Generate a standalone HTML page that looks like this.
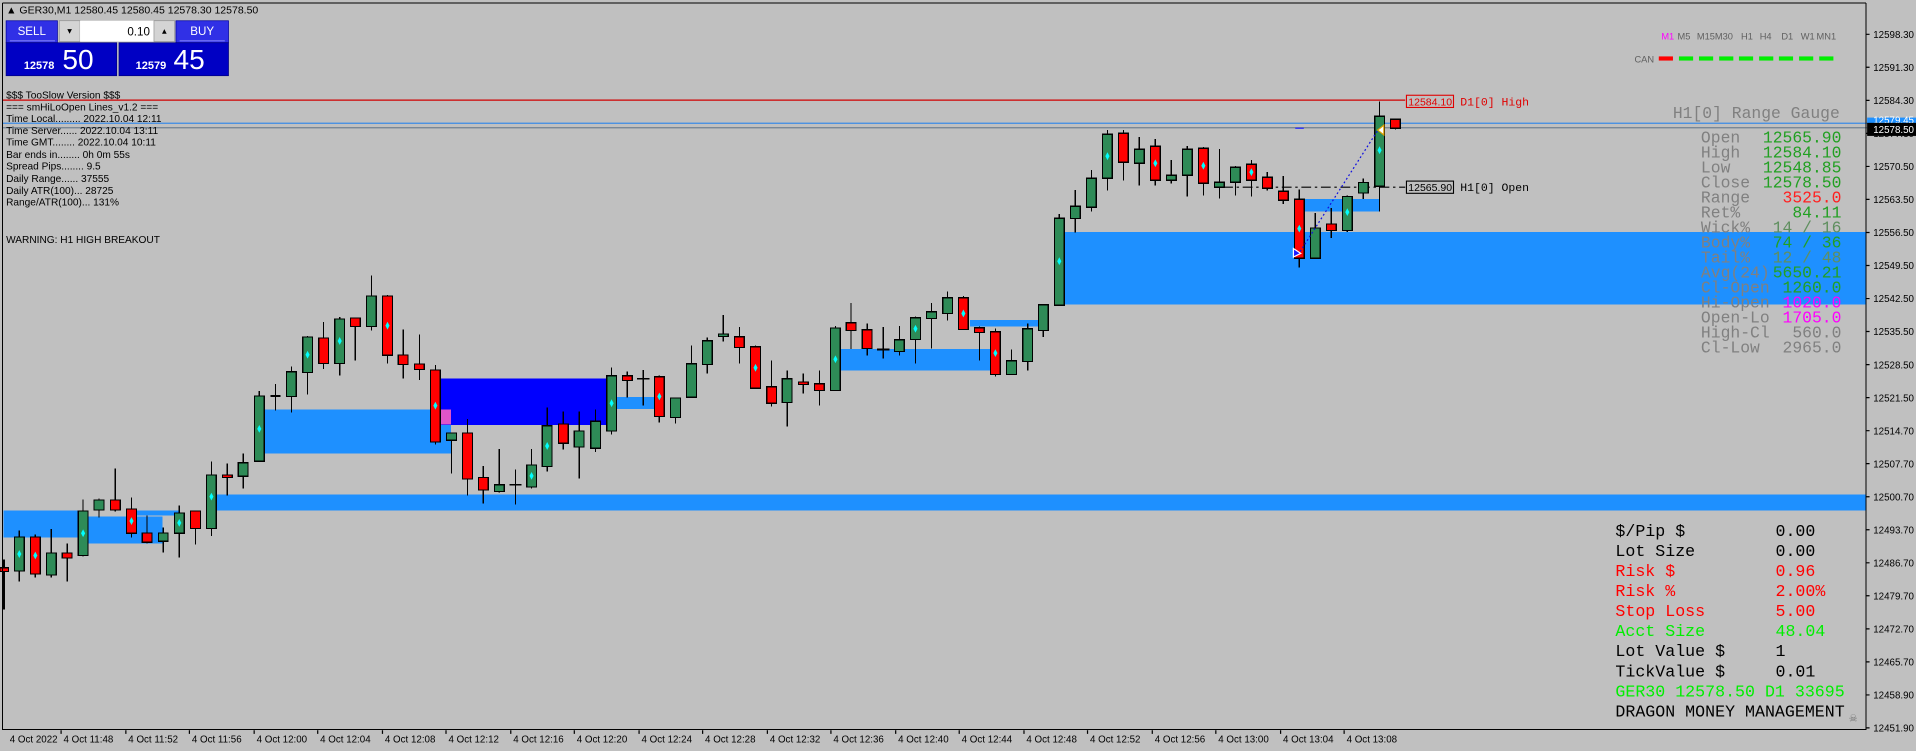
<!DOCTYPE html>
<html><head><meta charset="utf-8"><style>
html,body{margin:0;padding:0;background:#c0c0c0;overflow:hidden}
svg{display:block}
.g{fill:#2e8b57;stroke:#000;stroke-width:1}
.r{fill:#ff0000;stroke:#000;stroke-width:1}
.w{stroke:#000;stroke-width:1;fill:none}
.dm{fill:#00ffff}
.lb{fill:#1e90ff}
.t{font-family:"Liberation Sans",sans-serif;font-size:8.3px;fill:#000}
.ax{font-family:"Liberation Sans",sans-serif;font-size:8px;fill:#000}
.m{font-family:"Liberation Mono",monospace;font-size:13.4px}
</style></head><body>
<svg width="1916" height="751" viewBox="0 0 1568 615" preserveAspectRatio="none" xmlns="http://www.w3.org/2000/svg">
<rect x="0" y="0" width="1568" height="615" fill="#c0c0c0"/>
<!-- zones -->
<g shape-rendering="crispEdges">
<rect class="lb" x="3" y="418" width="65" height="22"/>
<rect class="lb" x="68" y="423" width="65" height="22"/>
<rect class="lb" x="111" y="418" width="35" height="4"/>
<rect class="lb" x="216.6" y="335.5" width="152.4" height="35.8"/>
<rect fill="#0000ff" x="361" y="310" width="135" height="38"/>
<rect fill="#e055c8" x="361" y="335.5" width="8" height="12.3"/>
<rect class="lb" x="500" y="325" width="36" height="10"/>
<rect class="lb" x="177.4" y="405" width="1350" height="13"/>
<rect class="lb" x="688" y="285.6" width="122" height="17.7"/>
<rect class="lb" x="793.7" y="261.9" width="56.3" height="5.4"/>
<rect class="lb" x="871" y="189.8" width="656" height="59.5"/>
<rect class="lb" x="1067" y="163" width="62" height="10"/>
</g>
<!-- horizontal lines -->
<line x1="2" y1="82" x2="1150" y2="82" stroke="#d00000" stroke-width="1"/>
<line x1="2" y1="100.9" x2="1568" y2="100.9" stroke="#3c8ce6" stroke-width="1"/>
<line x1="2" y1="104.6" x2="1528" y2="104.6" stroke="#708090" stroke-width="1"/>
<line x1="1001" y1="153.3" x2="1150" y2="153.3" stroke="#000" stroke-width="1" stroke-dasharray="8,3,2,3"/>
<line x1="1060" y1="105" x2="1067" y2="105" stroke="#2020ff" stroke-width="1"/>
<!-- wicks -->
<g class="w" shape-rendering="crispEdges">
<path d="M3 458V499" stroke-width="2"/>
<path d="M15.8 434.6V476M28.9 437.8V472.8M42 433V472.8M55 445V476M68 409V455.6M81 408.4V423.7M94.4 383.8V418.7M107.6 407.6V440M120.4 422.3V445M133.6 432V452.3M146.7 414V456.4M160 418.5V445.7M173 378V439M186 379.7V405.7M199 371.5V400M212.2 320V378M225.4 314.3V336M238.5 300V337.7"/>
<path d="M251.7 275V323M264.8 263.5V302M278 259.7V307.7M290.8 260.5V295.4M304 225.8V270.8M317.1 241.4V297.8M330 270V310M343.2 274V311M356.3 299V364M369.5 354V387.6M382.6 343V405.6M395.5 381.6V412.2M408.6 367.5V403.5M421.8 384.6V413M435 367.5V400M447.8 333.6V386M461 337V368M474 337V392M487.4 335.5V370M500.5 301V356"/>
<path d="M513.4 304.4V325.4M526.5 302.8V332M539.6 307.4V345.9M552.8 326V346.7M565.9 283.1V325.4M578.8 276.3V305.8M591.9 257.8V279.6M605.1 267.6V297.6M618.3 282.9V318M631.4 295.4V332.8M644.2 303.6V349.2M657.4 306V322.1M670.6 303.6V332M683.7 266.8V319.7M696.5 248V285.9M709.7 265.1V291M722.9 267.6V293.5M736.1 266.8V291M749.2 259.1V297.6M762.3 248V285.3M775.5 238.9V262.4M788.4 242.2V269.8M801.5 267.3V295.1M814.6 269.2V308.2M827.8 286.4V306.6M841 265.1V303.3M853.8 249.6V275.8"/>
<path d="M866.9 175.1V250M880 155.5V190.4M893.2 139.1V173.2M906.3 106.5V156M919.4 106.5V147.9M932.4 112.1V152M945.5 114V152M958.6 131V150.3M971.7 119.5V161M984.8 120.3V160.1M997.9 122V162.6M1011 135.9V160.1M1024.1 131V161M1037.1 140.8V156M1050.2 144V167M1063.3 155V219M1076.4 174.5V211.4M1089.5 170.5V195M1102.6 160V190M1115.7 146V163M1129 83.2V173.2M1142 97V106"/>
<path d="M221.4 324.4H229.4M717.9 286.1H727.9M416.8 397H426.8M521.5 310.1H531.5" stroke-width="1.5"/>
</g>
<!-- bodies -->
<g shape-rendering="crispEdges">
<rect class="r" x="0" y="465" width="7" height="3"/>
<rect class="g" x="11.8" y="439.7" width="8" height="27.9"/><rect class="r" x="24.9" y="439.7" width="8" height="30.3"/><rect class="g" x="38" y="452.8" width="8" height="18.1"/><rect class="r" x="51" y="452.8" width="8" height="4.2"/><rect class="g" x="64" y="418.5" width="8" height="36.3"/><rect class="g" x="77" y="409.5" width="8" height="8.1"/><rect class="r" x="90.4" y="409.5" width="8" height="8.1"/><rect class="r" x="103.6" y="416.8" width="8" height="19.9"/><rect class="r" x="116.4" y="436.5" width="8" height="7.5"/><rect class="g" x="129.6" y="436.5" width="8" height="6.8"/><rect class="g" x="142.7" y="420" width="8" height="16.7"/><rect class="r" x="156" y="418.5" width="8" height="14.2"/><rect class="g" x="169" y="389" width="8" height="43.7"/><rect class="r" x="182" y="389" width="8" height="2"/><rect class="g" x="195" y="379" width="8" height="11"/><rect class="g" x="208.2" y="324.4" width="8" height="53.4"/><rect class="g" x="234.5" y="304.4" width="8" height="20.2"/>
<rect class="g" x="247.7" y="276" width="8" height="29"/><rect class="r" x="260.8" y="276.8" width="8" height="20.8"/><rect class="g" x="274" y="261.3" width="8" height="36.3"/><rect class="r" x="286.8" y="260.5" width="8" height="6.8"/><rect class="g" x="300" y="242.5" width="8" height="24.8"/><rect class="r" x="313.1" y="242.5" width="8" height="48.5"/><rect class="r" x="326" y="290.8" width="8" height="7.6"/><rect class="r" x="339.2" y="298" width="8" height="4.5"/><rect class="r" x="352.3" y="303" width="8" height="59"/><rect class="g" x="365.5" y="354.6" width="8" height="6"/><rect class="r" x="378.6" y="354.6" width="8" height="37.7"/><rect class="r" x="391.5" y="391" width="8" height="10.3"/><rect class="g" x="404.6" y="397" width="8" height="5.4"/><rect class="g" x="431" y="380.8" width="8" height="18"/><rect class="g" x="443.8" y="348.6" width="8" height="33.4"/><rect class="r" x="457" y="347.2" width="8" height="15.8"/><rect class="g" x="470" y="353" width="8" height="13"/><rect class="g" x="483.4" y="345" width="8" height="22"/><rect class="g" x="496.5" y="307.7" width="8" height="45.3"/>
<rect class="r" x="509.4" y="307.7" width="8" height="3.8"/><rect class="r" x="535.6" y="308.5" width="8" height="32.5"/><rect class="g" x="548.8" y="326" width="8" height="15.8"/><rect class="g" x="561.9" y="297.9" width="8" height="27.5"/><rect class="g" x="574.8" y="279" width="8" height="19.4"/><rect class="g" x="587.9" y="273.6" width="8" height="1.9"/><rect class="r" x="601.1" y="275.8" width="8" height="8.7"/><rect class="r" x="614.3" y="284" width="8" height="34"/><rect class="r" x="627.4" y="316.7" width="8" height="13.6"/><rect class="g" x="640.2" y="310.1" width="8" height="19.4"/><rect class="r" x="653.4" y="312.9" width="8" height="1.9"/><rect class="r" x="666.6" y="314.2" width="8" height="5.5"/><rect class="g" x="679.7" y="268.7" width="8" height="51"/><rect class="r" x="692.5" y="264.3" width="8" height="6.3"/><rect class="r" x="705.7" y="270" width="8" height="15.3"/><rect class="g" x="732.1" y="278.2" width="8" height="9.6"/><rect class="g" x="745.2" y="260.2" width="8" height="17.8"/><rect class="g" x="758.3" y="255.3" width="8" height="5.5"/><rect class="g" x="771.5" y="243.9" width="8" height="12.8"/><rect class="r" x="784.4" y="243.9" width="8" height="25.9"/><rect class="r" x="797.5" y="268.4" width="8" height="3.8"/><rect class="r" x="810.6" y="271.7" width="8" height="34.9"/><rect class="g" x="823.8" y="295.4" width="8" height="11.2"/><rect class="g" x="837" y="269.2" width="8" height="26.8"/><rect class="g" x="849.8" y="249.6" width="8" height="21"/>
<rect class="g" x="862.9" y="178.7" width="8" height="71.2"/><rect class="g" x="876" y="168.9" width="8" height="10.1"/><rect class="g" x="889.2" y="146" width="8" height="23.7"/><rect class="g" x="902.3" y="110" width="8" height="36"/><rect class="r" x="915.4" y="109.1" width="8" height="23.7"/><rect class="g" x="928.4" y="122.2" width="8" height="11.5"/><rect class="r" x="941.5" y="119.8" width="8" height="27.8"/><rect class="g" x="954.6" y="143.5" width="8" height="4.1"/><rect class="g" x="967.7" y="122.2" width="8" height="21.3"/><rect class="r" x="980.8" y="121.4" width="8" height="28.6"/><rect class="g" x="993.9" y="149.2" width="8" height="4.1"/><rect class="g" x="1007" y="137" width="8" height="12.2"/><rect class="r" x="1020.1" y="134.5" width="8" height="13.1"/><rect class="r" x="1033.1" y="145.1" width="8" height="9"/><rect class="r" x="1046.2" y="156.6" width="8" height="7.3"/><rect class="r" x="1059.3" y="163.1" width="8" height="48.3"/><rect class="g" x="1072.4" y="186.8" width="8" height="24.6"/><rect class="r" x="1085.5" y="183.5" width="8" height="5.2"/><rect class="g" x="1098.6" y="161" width="8" height="27.7"/><rect class="g" x="1111.7" y="149.5" width="8" height="8.5"/><rect class="g" x="1125" y="95.2" width="8" height="57.3"/><rect class="r" x="1138" y="97.7" width="8" height="7.3"/>
</g>
<!-- diamonds -->
<g class="dm">
<path d="M15.8 450.5l1.7 3.2-1.7 3.2-1.7-3.2zM28.9 451.7l1.7 3.2-1.7 3.2-1.7-3.2zM68 433.5l1.7 3.2-1.7 3.2-1.7-3.2zM107.6 423.5l1.7 3.2-1.7 3.2-1.7-3.2zM146.7 425l1.7 3.2-1.7 3.2-1.7-3.2zM173 403.5l1.7 3.2-1.7 3.2-1.7-3.2zM212.2 348l1.7 3.2-1.7 3.2-1.7-3.2zM251.7 287.3l1.7 3.2-1.7 3.2-1.7-3.2zM278 276l1.7 3.2-1.7 3.2-1.7-3.2zM317.1 263.5l1.7 3.2-1.7 3.2-1.7-3.2zM356.3 329l1.7 3.2-1.7 3.2-1.7-3.2zM435 386.5l1.7 3.2-1.7 3.2-1.7-3.2zM447.8 362l1.7 3.2-1.7 3.2-1.7-3.2zM500.5 327l1.7 3.2-1.7 3.2-1.7-3.2z"/>
<path d="M539.6 321.5l1.7 3.2-1.7 3.2-1.7-3.2zM618.3 298l1.7 3.2-1.7 3.2-1.7-3.2zM683.7 291l1.7 3.2-1.7 3.2-1.7-3.2zM749.2 266l1.7 3.2-1.7 3.2-1.7-3.2zM788.4 253.5l1.7 3.2-1.7 3.2-1.7-3.2zM814.6 286l1.7 3.2-1.7 3.2-1.7-3.2zM866.9 210.7l1.7 3.2-1.7 3.2-1.7-3.2zM906.3 124.7l1.7 3.2-1.7 3.2-1.7-3.2zM945.5 130.5l1.7 3.2-1.7 3.2-1.7-3.2zM984.8 132.5l1.7 3.2-1.7 3.2-1.7-3.2zM1024.1 137.8l1.7 3.2-1.7 3.2-1.7-3.2zM1063.3 184l1.7 3.2-1.7 3.2-1.7-3.2zM1102.6 170.5l1.7 3.2-1.7 3.2-1.7-3.2zM1129 119.8l1.7 3.2-1.7 3.2-1.7-3.2z"/>
</g>
<!-- dotted trend + markers -->
<line x1="1064" y1="206" x2="1128" y2="106" stroke="#1010e0" stroke-width="1" stroke-dasharray="1.5,2"/>
<path d="M1058.5 203.5l6 4-6 3z" fill="#1a1aff" stroke="#fff" stroke-width="1"/>
<path d="M1132.5 102.5l-5 4 5 4z" fill="#fff" stroke="#e0a000" stroke-width="1"/>
<!-- line labels -->
<rect x="1151" y="78" width="38.5" height="10" fill="#c0c0c0" stroke="#e00000" stroke-width="0.9"/>
<text x="1152.5" y="86.3" class="t" fill="#e00000" style="fill:#e00000;font-size:8.6px">12584.10</text>
<text x="1195" y="86.3" style="font-family:'Liberation Mono',monospace;font-size:9.4px;fill:#e00000">D1[0] High</text>
<rect x="1151" y="148.3" width="38.5" height="10" fill="#c0c0c0" stroke="#000" stroke-width="0.9"/>
<text x="1152.5" y="156.6" class="t" style="font-size:8.6px">12565.90</text>
<text x="1195" y="156.6" style="font-family:'Liberation Mono',monospace;font-size:9.4px;fill:#000">H1[0] Open</text>
<!-- frame -->
<g shape-rendering="crispEdges" stroke="#000" stroke-width="1" fill="none">
<path d="M2 2.5H1527M2 2.5V597.5H1527V2.5"/>
</g>
<!-- price axis -->
<g class="ax">
<text x="1533" y="31.1">12598.30</text><text x="1533" y="58.1">12591.30</text><text x="1533" y="85.2">12584.30</text><text x="1533" y="112.2">12577.30</text><text x="1533" y="139.3">12570.50</text><text x="1533" y="166.3">12563.50</text><text x="1533" y="193.4">12556.50</text><text x="1533" y="220.4">12549.50</text><text x="1533" y="247.5">12542.50</text><text x="1533" y="274.5">12535.50</text><text x="1533" y="301.6">12528.50</text><text x="1533" y="328.6">12521.50</text><text x="1533" y="355.7">12514.70</text><text x="1533" y="382.7">12507.70</text><text x="1533" y="409.8">12500.70</text><text x="1533" y="436.8">12493.70</text><text x="1533" y="463.9">12486.70</text><text x="1533" y="490.9">12479.70</text><text x="1533" y="518">12472.70</text><text x="1533" y="545">12465.70</text><text x="1533" y="572.1">12458.90</text><text x="1533" y="599.1">12451.90</text>
</g>
<path d="M1527 28.1h3M1527 55.1h3M1527 82.2h3M1527 109.2h3M1527 136.3h3M1527 163.3h3M1527 190.4h3M1527 217.4h3M1527 244.5h3M1527 271.5h3M1527 298.6h3M1527 325.6h3M1527 352.7h3M1527 379.7h3M1527 406.8h3M1527 433.8h3M1527 460.9h3M1527 487.9h3M1527 515h3M1527 542h3M1527 569.1h3M1527 596.1h3" stroke="#000" stroke-width="1"/>
<rect x="1528" y="96.3" width="40" height="5" fill="#1e90ff"/>
<text x="1533" y="101" class="ax" style="fill:#fff">12579.45</text>
<rect x="1528" y="100.6" width="40" height="10.7" fill="#000"/>
<text x="1533" y="109" class="ax" style="fill:#fff">12578.50</text>
<!-- time axis -->
<g class="ax">
<text x="8" y="608">4 Oct 2022</text><text x="52" y="608">4 Oct 11:48</text><text x="105" y="608">4 Oct 11:52</text><text x="157" y="608">4 Oct 11:56</text><text x="210" y="608">4 Oct 12:00</text><text x="262" y="608">4 Oct 12:04</text><text x="315" y="608">4 Oct 12:08</text><text x="367" y="608">4 Oct 12:12</text><text x="420" y="608">4 Oct 12:16</text><text x="472" y="608">4 Oct 12:20</text><text x="525" y="608">4 Oct 12:24</text><text x="577" y="608">4 Oct 12:28</text><text x="630" y="608">4 Oct 12:32</text><text x="682" y="608">4 Oct 12:36</text><text x="735" y="608">4 Oct 12:40</text><text x="787" y="608">4 Oct 12:44</text><text x="840" y="608">4 Oct 12:48</text><text x="892" y="608">4 Oct 12:52</text><text x="945" y="608">4 Oct 12:56</text><text x="997" y="608">4 Oct 13:00</text><text x="1050" y="608">4 Oct 13:04</text><text x="1102" y="608">4 Oct 13:08</text>
</g>
<path d="M50 598v3M103 598v3M155 598v3M208 598v3M260 598v3M313 598v3M365 598v3M418 598v3M470 598v3M523 598v3M575 598v3M628 598v3M680 598v3M733 598v3M785 598v3M838 598v3M890 598v3M943 598v3M995 598v3M1048 598v3M1100 598v3" stroke="#000" stroke-width="1"/>
<!-- top-left trade panel -->
<text x="5" y="11" class="t" style="font-size:8.6px">▲ GER30,M1  12580.45 12580.45 12578.30 12578.50</text>
<rect x="5" y="17" width="42" height="18" fill="#3030e6" stroke="#0000a0" stroke-width="0.6"/>
<line x1="8" y1="33.5" x2="45" y2="33.5" stroke="#a0a0ff" stroke-width="0.6"/>
<text x="26" y="28.5" text-anchor="middle" style="font-family:'Liberation Sans',sans-serif;font-size:9.5px;fill:#fff">SELL</text>
<rect x="48.5" y="17" width="17" height="17" fill="#d4d4d4" stroke="#888" stroke-width="0.5"/>
<text x="57" y="27" text-anchor="middle" style="font-size:5px;fill:#000;font-family:'DejaVu Sans',sans-serif">▼</text>
<rect x="65.5" y="17" width="60.5" height="17" fill="#fff"/>
<text x="122.7" y="29" text-anchor="end" style="font-family:'Liberation Sans',sans-serif;font-size:9.5px;fill:#000">0.10</text>
<rect x="126" y="17" width="17" height="17" fill="#d4d4d4" stroke="#888" stroke-width="0.5"/>
<text x="134.5" y="27" text-anchor="middle" style="font-size:5px;fill:#000;font-family:'DejaVu Sans',sans-serif">▲</text>
<rect x="144" y="17" width="43" height="18" fill="#3030e6" stroke="#0000a0" stroke-width="0.6"/>
<line x1="147" y1="33.5" x2="184" y2="33.5" stroke="#a0a0ff" stroke-width="0.6"/>
<text x="165.5" y="28.5" text-anchor="middle" style="font-family:'Liberation Sans',sans-serif;font-size:9.5px;fill:#fff">BUY</text>
<rect x="5" y="35" width="90.5" height="27" fill="#0000c4" stroke="#000080" stroke-width="0.6"/>
<rect x="97.4" y="35" width="89.6" height="27" fill="#0000c4" stroke="#000080" stroke-width="0.6"/>
<text x="19.5" y="56.5" style="font-family:'Liberation Sans',sans-serif;font-weight:bold;font-size:9px;fill:#fff">12578</text>
<text x="51" y="56.5" style="font-family:'Liberation Sans',sans-serif;font-size:23px;fill:#fff">50</text>
<text x="111" y="56.5" style="font-family:'Liberation Sans',sans-serif;font-weight:bold;font-size:9px;fill:#fff">12579</text>
<text x="142" y="56.5" style="font-family:'Liberation Sans',sans-serif;font-size:23px;fill:#fff">45</text>
<!-- info text -->
<g class="t">
<text x="5" y="80.5">$$$ TooSlow Version $$$</text>
<text x="5" y="90.5">=== smHiLoOpen Lines_v1.2 ===</text>
<text x="5" y="99.8">Time Local......... 2022.10.04 12:11</text>
<text x="5" y="109.8">Time Server...... 2022.10.04 13:11</text>
<text x="5" y="119.3">Time GMT........ 2022.10.04 10:11</text>
<text x="5" y="129.3">Bar ends in........ 0h 0m 55s</text>
<text x="5" y="138.9">Spread Pips........ 9.5</text>
<text x="5" y="149.2">Daily Range...... 37555</text>
<text x="5" y="158.8">Daily ATR(100)... 28725</text>
<text x="5" y="168.4">Range/ATR(100)... 131%</text>
<text x="5" y="199">WARNING: H1 HIGH BREAKOUT</text>
</g>
<!-- MTF -->
<g style="font-family:'Liberation Sans',sans-serif;font-size:7.6px;fill:#606060">
<text x="1359.6" y="32.5" style="fill:#ff00ff">M1</text><text x="1372.8" y="32.5">M5</text><text x="1388.7" y="32.5">M15</text><text x="1403.4" y="32.5">M30</text><text x="1424.8" y="32.5">H1</text><text x="1440.1" y="32.5">H4</text><text x="1457.8" y="32.5">D1</text><text x="1473.7" y="32.5">W1</text><text x="1486.6" y="32.5">MN1</text>
<text x="1337.6" y="51">CAN</text>
</g>
<rect x="1357.5" y="46.2" width="11.6" height="3.4" fill="#ff0000"/>
<g fill="#00ee00"><rect x="1374" y="46.2" width="11.6" height="3.4"/><rect x="1390.4" y="46.2" width="11.6" height="3.4"/><rect x="1406.9" y="46.2" width="11.6" height="3.4"/><rect x="1423.1" y="46.2" width="11.6" height="3.4"/><rect x="1439.6" y="46.2" width="11.6" height="3.4"/><rect x="1455.8" y="46.2" width="11.6" height="3.4"/><rect x="1472.3" y="46.2" width="11.6" height="3.4"/><rect x="1488.8" y="46.2" width="11.6" height="3.4"/></g>
<!-- range gauge -->
<g class="m" style="fill:#808080">
<text x="1369" y="96.5">H1[0] Range Gauge</text>
<text x="1392" y="116.5">Open</text><text x="1392" y="128.8">High</text><text x="1392" y="141.1">Low</text><text x="1392" y="153.4">Close</text><text x="1392" y="165.7">Range</text><text x="1392" y="178">Ret%</text><text x="1392" y="190.3">Wick%</text><text x="1392" y="202.6">Body%</text><text x="1392" y="214.9">Tail%</text><text x="1392" y="227.2">Avg(24)</text><text x="1392" y="239.5">Cl-Open</text><text x="1392" y="251.8">Hi-Open</text><text x="1392" y="264.1">Open-Lo</text><text x="1392" y="276.4">High-Cl</text><text x="1392" y="288.7">Cl-Low</text>
</g>
<g class="m" text-anchor="end" style="fill:#22a022">
<text x="1507" y="116.5">12565.90</text><text x="1507" y="128.8">12584.10</text><text x="1507" y="141.1">12548.85</text><text x="1507" y="153.4">12578.50</text><text x="1507" y="165.7" style="fill:#ff2020">3525.0</text><text x="1507" y="178">84.11</text><text x="1507" y="190.3" style="fill:#5f8f5f">14 / 16</text><text x="1507" y="202.6">74 / 36</text><text x="1507" y="214.9" style="fill:#5f8f5f">12 / 48</text><text x="1507" y="227.2">5650.21</text><text x="1507" y="239.5">1260.0</text><text x="1507" y="251.8" style="fill:#ff00ff">1020.0</text><text x="1507" y="264.1" style="fill:#ff00ff">1705.0</text><text x="1507" y="276.4" style="fill:#808080">560.0</text><text x="1507" y="288.7" style="fill:#808080">2965.0</text>
</g>
<!-- money management -->
<g class="m" style="font-size:13.6px">
<text x="1322" y="439" fill="#000">$/Pip $</text><text x="1453" y="439" fill="#000">0.00</text>
<text x="1322" y="455.4" fill="#000">Lot Size</text><text x="1453" y="455.4" fill="#000">0.00</text>
<text x="1322" y="471.8" fill="#ff0000">Risk $</text><text x="1453" y="471.8" fill="#ff0000">0.96</text>
<text x="1322" y="488.2" fill="#ff0000">Risk %</text><text x="1453" y="488.2" fill="#ff0000">2.00%</text>
<text x="1322" y="504.6" fill="#ff0000">Stop Loss</text><text x="1453" y="504.6" fill="#ff0000">5.00</text>
<text x="1322" y="521" fill="#00ee00">Acct Size</text><text x="1453" y="521" fill="#00ee00">48.04</text>
<text x="1322" y="537.4" fill="#000">Lot Value $</text><text x="1453" y="537.4" fill="#000">1</text>
<text x="1322" y="553.8" fill="#000">TickValue $</text><text x="1453" y="553.8" fill="#000">0.01</text>
<text x="1322" y="570.2" fill="#00ee00">GER30 12578.50 D1 33695</text>
<text x="1322" y="586.6" fill="#000">DRAGON MONEY MANAGEMENT</text>
</g>
<text x="1513" y="591" style="font-family:'DejaVu Sans',sans-serif;font-size:8px;fill:#707070">☠</text>
</svg>
</body></html>
